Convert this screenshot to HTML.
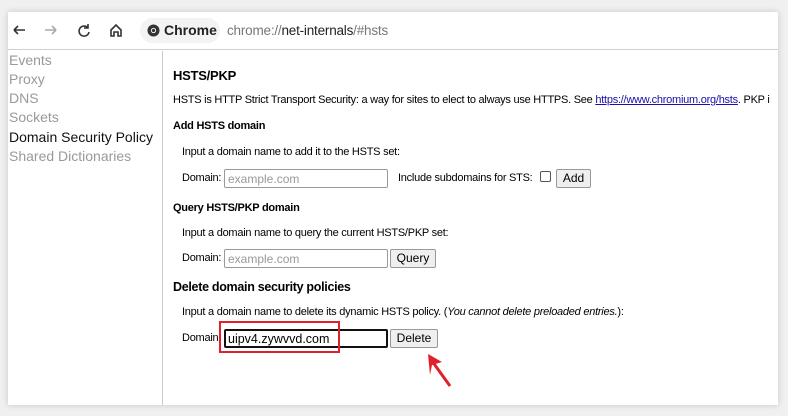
<!DOCTYPE html>
<html><head><style>
*{margin:0;padding:0;box-sizing:border-box}
body{width:788px;height:416px;background:#f0f0f0;position:relative;overflow:hidden;font-family:"Liberation Sans",sans-serif}
.win{position:absolute;left:8px;top:12px;width:770px;height:393px;background:#fff;box-shadow:0 0 6px rgba(0,0,0,.18);overflow:hidden}
.tb{position:absolute;left:0;top:0;width:770px;height:38px;border-bottom:1px solid #d0d0d0;background:#fff}
.a{position:absolute;font-size:11px;letter-spacing:-.25px;color:#000;white-space:nowrap}
.side{position:absolute;left:0;top:39px;width:155px;height:354px;border-right:1px solid #ccc}
.si{position:absolute;left:1px;font-size:14px;color:#999;white-space:nowrap}
.inp{position:absolute;height:19px;width:164px;border:1px solid #999;font-size:12px;color:#999;padding:2px 3px;background:#fff;border-radius:2px}
.btn{position:absolute;height:19px;border:1px solid #999;background:#efefef;border-radius:2px;font-size:12px;text-align:center;line-height:17px}
b{font-weight:bold}
</style></head><body>
<div class="win">
<div class="tb">
<svg style="position:absolute;left:0;top:0" width="130" height="38">
<g fill="none" stroke="#333" stroke-width="1.6">
<path d="M6 18h11M6 18l4-4M6 18l4 4"/>
<path d="M37 18h11M48 18l-4-4M48 18l-4 4" stroke="#aaa"/>
<path d="M80 16a5 5 0 1 0 1 4M80 12v4h-4"/>
<path d="M103 24v-6l5-5 5 5v6h-3v-4h-4v4z"/>
</g></svg>
<div style="position:absolute;left:132px;top:6px;width:80px;height:25px;border-radius:13px;background:#f3f3f3"></div>
<svg style="position:absolute;left:139px;top:12px" width="13" height="13"><circle cx="6.5" cy="6.5" r="6" fill="#333"/><circle cx="6.5" cy="6.5" r="2.6" fill="#f3f3f3"/><circle cx="6.5" cy="6.5" r="1.6" fill="#333"/></svg>
<div class="a" style="left:156px;top:10px;font-size:14px;letter-spacing:0;font-weight:bold;color:#222">Chrome</div>
<div class="a" style="left:219px;top:11px;font-size:13.5px;letter-spacing:-.2px;color:#777">chrome://<span style="color:#222">net-internals</span>/#hsts</div>
</div>
<div class="side">
<div class="si" style="top:1px">Events</div>
<div class="si" style="top:20px">Proxy</div>
<div class="si" style="top:39px">DNS</div>
<div class="si" style="top:58px">Sockets</div>
<div class="si" style="top:78px;color:#111">Domain Security Policy</div>
<div class="si" style="top:97px">Shared Dictionaries</div>
</div>
<div class="a" style="left:165px;top:56px;font-size:13px"><b>HSTS/PKP</b></div>
<div class="a" style="left:165px;top:82px">HSTS is HTTP Strict Transport Security: a way for sites to elect to always use HTTPS. See <span style="color:#1a0dab;text-decoration:underline">https://www.chromium.org/hsts</span>. PKP i</div>
<div class="a" style="left:165px;top:108px"><b>Add HSTS domain</b></div>
<div class="a" style="left:174px;top:134px">Input a domain name to add it to the HSTS set:</div>
<div class="a" style="left:174px;top:160px">Domain:</div>
<div class="inp" style="left:216px;top:157px">example.com</div>
<div class="a" style="left:390px;top:160px">Include subdomains for STS:</div>
<div style="position:absolute;left:532px;top:159px;width:11px;height:11px;border:1px solid #555;border-radius:2px"></div>
<div class="btn" style="left:548px;top:157px;width:35px">Add</div>
<div class="a" style="left:165px;top:190px"><b>Query HSTS/PKP domain</b></div>
<div class="a" style="left:174px;top:215px">Input a domain name to query the current HSTS/PKP set:</div>
<div class="a" style="left:174px;top:240px">Domain:</div>
<div class="inp" style="left:216px;top:237px">example.com</div>
<div class="btn" style="left:382px;top:237px;width:46px">Query</div>
<div class="a" style="left:165px;top:268px;font-size:12.5px;letter-spacing:-.3px"><b>Delete domain security policies</b></div>
<div class="a" style="left:174px;top:294px">Input a domain name to delete its dynamic HSTS policy. (<i>You cannot delete preloaded entries.</i>):</div>
<div class="a" style="left:174px;top:320px">Domain:</div>
<div class="inp" style="left:216px;top:317px;border:2px solid #111;color:#000;padding:1px 2px;font-size:12.5px">uipv4.zywvvd.com</div>
<div class="btn" style="left:382px;top:317px;width:48px">Delete</div>
<div style="position:absolute;left:211px;top:309px;width:121px;height:32px;border:2px solid #e0202a"></div>
<svg style="position:absolute;left:410px;top:335px" width="40" height="45"><path d="M32 39L14 14" stroke="#e0202a" stroke-width="3" fill="none"/><path d="M10 7l14 8-10 3-2 10z" fill="#e0202a"/></svg>
</div>
</body></html>
